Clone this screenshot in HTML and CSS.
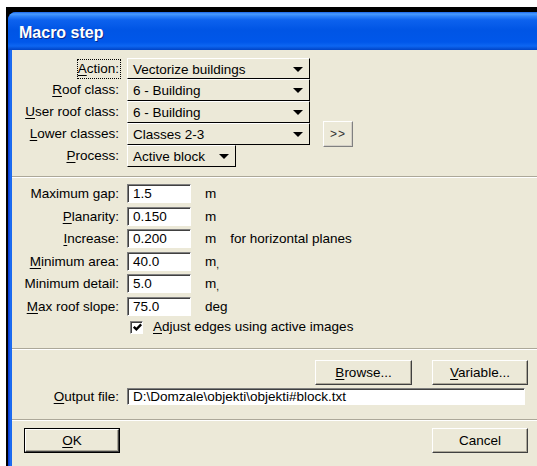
FILE: index.html
```html
<!DOCTYPE html>
<html>
<head>
<meta charset="utf-8">
<title>Macro step</title>
<link rel="stylesheet" href="styles.css">
</head>
<body>
<div class="desk">
  <div class="window">
    <div class="titlebar"><span class="title">Macro step</span></div>
    <div class="client">

      <div class="choices">
        <div class="lbl"><span class="focus"><u>A</u>ction:</span></div>
        <div class="combo"><span class="val">Vectorize buildings</span><i class="arrow"></i></div>
        <div></div>

        <div class="lbl"><u>R</u>oof class:</div>
        <div class="combo"><span class="val">6 - Building</span><i class="arrow"></i></div>
        <div></div>

        <div class="lbl"><u>U</u>ser roof class:</div>
        <div class="combo"><span class="val">6 - Building</span><i class="arrow"></i></div>
        <div></div>

        <div class="lbl"><u>L</u>ower classes:</div>
        <div class="combo"><span class="val">Classes 2-3</span><i class="arrow"></i></div>
        <div class="more-cell"><button class="btn more">&gt;&gt;</button></div>

        <div class="lbl"><u>P</u>rocess:</div>
        <div class="combo short"><span class="val">Active block</span><i class="arrow"></i></div>
        <div></div>
      </div>

      <hr class="etch first">

      <div class="params">
        <div class="lbl">Maximum gap:</div>
        <div class="field">1.5</div>
        <div class="unit">m</div>

        <div class="lbl"><u>P</u>lanarity:</div>
        <div class="field">0.150</div>
        <div class="unit">m</div>

        <div class="lbl"><u>I</u>ncrease:</div>
        <div class="field">0.200</div>
        <div class="unit">m<span class="note">for horizontal planes</span></div>

        <div class="lbl"><u>M</u>inimum area:</div>
        <div class="field">40.0</div>
        <div class="unit">m<span class="mark">,</span></div>

        <div class="lbl">Minimum detail:</div>
        <div class="field">5.0</div>
        <div class="unit">m<span class="mark">,</span></div>

        <div class="lbl"><u>M</u>ax roof slope:</div>
        <div class="field">75.0</div>
        <div class="unit">deg</div>
      </div>

      <div class="check-row">
        <span class="checkbox">
          <svg width="9" height="9" viewBox="0 0 9 9"><path d="M0.8 3.8 L3.4 6.4 L8.2 1.4" fill="none" stroke="#000" stroke-width="2.4"/></svg>
        </span>
        <span class="check-text"><u>A</u>djust edges using active images</span>
      </div>

      <hr class="etch second">

      <div class="output">
        <div class="browse-row">
          <button class="btn wide browse"><u>B</u>rowse...</button>
          <button class="btn wide"><u>V</u>ariable...</button>
        </div>
        <div class="file-row">
          <div class="lbl"><u>O</u>utput file:</div>
          <div class="field path">D:\Domzale\objekti\objekti#block.txt</div>
        </div>
      </div>

      <hr class="etch third">

      <div class="actions">
        <span class="default-frame"><button class="btn dlg"><u>O</u>K</button></span>
        <button class="btn dlg cancel">Cancel</button>
      </div>

    </div>
  </div>
</div>
</body>
</html>
```

FILE: styles.css
```css
html, body {
  margin: 0;
  padding: 0;
  background: #fff;
  overflow: hidden;
  width: 537px;
  height: 466px;
}

body {
  font-family: "Liberation Sans", Arial, sans-serif;
  font-size: 13.5px;
  color: #000;
}

u { text-decoration: underline; text-underline-offset: 2px; }

/* black backdrop behind the rounded window corner */
.desk {
  margin: 7px 0 0 6px;
  padding: 5px 0 0 2px;
  background: #000;
  width: 540px;
  height: 470px;
}

.window {
  width: 540px;
  height: 470px;
  border-top-left-radius: 8px;
  background: linear-gradient(to right, #0a2fc8 0, #1060ee 2px, #2a78f6 3px, #0a5ae8 4px);
  overflow: hidden;
}

.titlebar {
  height: 38px;
  padding: 5px 0 0 11px;
  box-sizing: border-box;
  background: linear-gradient(to bottom,
    #1a66ec 0px, #4a9cff 2px, #2f84fa 4px, #0d62ee 8px,
    #0055e5 18px, #0057ea 30px, #0d66f2 34px, #0044c6 38px);
}

.title {
  font-family: "Liberation Sans", Arial, sans-serif;
  font-weight: bold;
  font-size: 16px;
  line-height: 32px;
  color: #fff;
  text-shadow: 1px 1px 0 #0b2a8c;
}

.client {
  margin-left: 4px;
  width: 525px;
  height: 432px;
  background: #ece9d8;
}

/* ----- combo boxes ----- */
.choices {
  display: grid;
  grid-template-columns: 115px 183px 1fr;
  grid-template-rows: 21px 22px 22px 22px 22px;
  padding-top: 8px;
}

.lbl {
  text-align: right;
  padding-right: 8px;
  white-space: nowrap;
  align-self: center;
  line-height: 16px;
}

.focus {
  display: inline-block;
  border: 1px dotted #000;
  padding: 1px 1px 1px 0;
  line-height: 16px;
  margin-right: -2px;
}

.combo {
  display: flex;
  align-items: center;
  justify-content: space-between;
  box-sizing: border-box;
  border-style: solid;
  border-width: 1px;
  border-color: #fff #000 #000 #fff;
  padding: 1px 6px 0 5px;
  background: #ece9d8;
  white-space: nowrap;
}

.combo.short {
  width: 109px;
}

.arrow {
  width: 0;
  height: 0;
  border-left: 5px solid transparent;
  border-right: 5px solid transparent;
  border-top: 5px solid #000;
}

.more-cell {
  display: flex;
  align-items: center;
  padding-left: 13px;
}

/* ----- raised buttons ----- */
.btn {
  font: inherit;
  color: #000;
  background: #ece9d8;
  box-sizing: border-box;
  border-style: solid;
  border-width: 1px;
  border-color: #fff #404040 #404040 #fff;
  box-shadow: inset -1px -1px 0 #aca899;
  padding: 0;
  margin: 0;
  line-height: 16px;
}

.more {
  width: 30px;
  height: 26px;
  margin: -2px 0;
  font-size: 12px;
  letter-spacing: 1px;
  color: #333;
  border-color: #fff #808080 #808080 #fff;
  box-shadow: inset -1px -1px 0 #d4d0c8;
}

/* ----- etched separators ----- */
.etch {
  margin: 0;
  height: 0;
  border: 0;
  border-top: 1px solid #aca899;
  border-bottom: 1px solid #fff;
}

.etch.first { margin-top: 9px; }
.etch.second { margin-top: 14px; }
.etch.third { margin-top: 14px; }

/* ----- numeric parameters ----- */
.params {
  display: grid;
  grid-template-columns: 115px 64px 1fr;
  grid-template-rows: 23px 22px 23px 22px 23px 22px;
  padding-top: 6px;
}

.params .lbl {
  align-self: start;
  line-height: 19px;
}

.field {
  box-sizing: border-box;
  height: 19px;
  background: #fff;
  border-style: solid;
  border-width: 1px;
  border-color: #808080 #fff #fff #808080;
  box-shadow: inset 1px 1px 0 #404040;
  padding: 1px 0 0 5px;
  line-height: 16px;
  white-space: nowrap;
  overflow: hidden;
}

.unit {
  padding-left: 14px;
  line-height: 19px;
  white-space: nowrap;
}

.note { margin-left: 14px; }

.mark {
  font-size: 10px;
  position: relative;
  top: 2px;
  margin-left: 0;
}

.check-row {
  display: flex;
  align-items: center;
  height: 14px;
  margin-top: 1px;
  padding-left: 118px;
}

.checkbox {
  width: 13px;
  height: 13px;
  box-sizing: border-box;
  background: #fff;
  border-style: solid;
  border-width: 1px;
  border-color: #808080 #fff #fff #808080;
  box-shadow: inset 1px 1px 0 #404040;
  display: flex;
  align-items: center;
  justify-content: center;
}

.checkbox svg { display: block; margin: 1px 0 0 1px; }

.check-text { margin-left: 10px; line-height: 16px; }

/* ----- output file ----- */
.output { padding-top: 10px; }

.browse-row {
  display: flex;
  justify-content: flex-end;
  gap: 20px;
  padding-right: 9px;
}

.wide {
  width: 96px;
  height: 25px;
}

.wide.browse { width: 97px; }

.file-row {
  display: grid;
  grid-template-columns: 115px 398px;
  margin-top: 3px;
}

.field.path {
  height: 17px;
  padding-top: 0;
}

/* ----- dialog buttons ----- */
.actions {
  display: flex;
  justify-content: space-between;
  padding: 7px 9px 0 12px;
}

.default-frame {
  display: block;
  width: 96px;
  height: 25px;
  box-sizing: border-box;
  border: 1px solid #000;
}

.dlg {
  width: 94px;
  height: 23px;
  display: block;
}

.btn.cancel {
  width: 96px;
  height: 25px;
}
```
